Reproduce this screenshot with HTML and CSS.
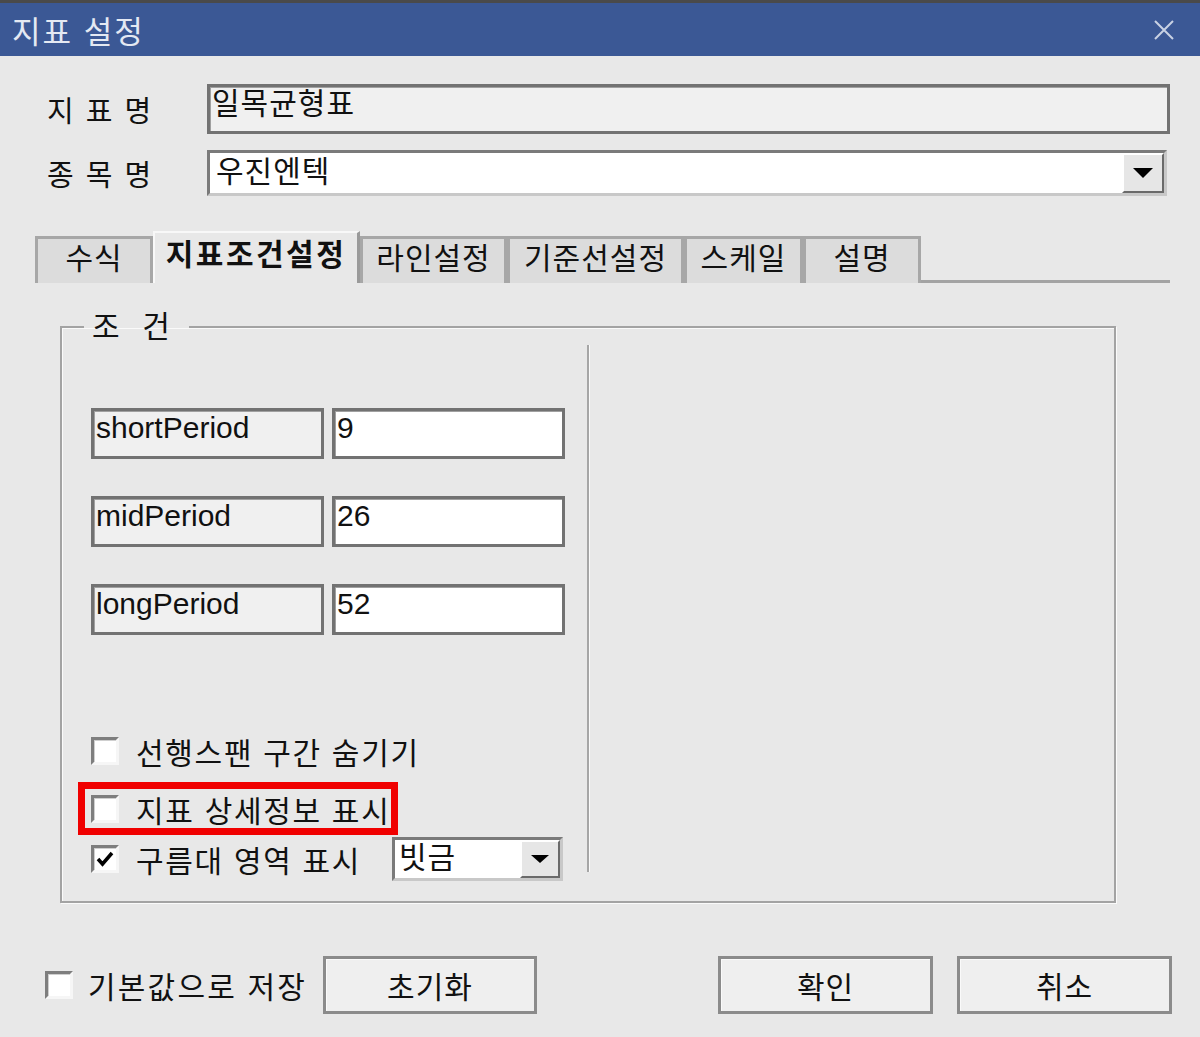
FILE: index.html
```html
<!DOCTYPE html>
<html lang="ko">
<head>
<meta charset="utf-8">
<title>지표 설정</title>
<link rel="stylesheet" href="styles.css">
</head>
<body>
<div class="dialog">
  <div class="titlebar">
    <span class="title">지표 설정</span>
    <svg class="close" width="22" height="22" viewBox="0 0 22 22"><path d="M2 2 L20 20 M20 2 L2 20" stroke="#c9d2e4" stroke-width="2" fill="none"/></svg>
  </div>

  <div class="row row-name">
    <span class="row-label">지 표 명</span>
    <div class="edit readonly wide">일목균형표</div>
  </div>
  <div class="row row-item">
    <span class="row-label">종 목 명</span>
    <div class="combo wide-combo">
      <span class="combo-text">우진엔텍</span>
      <span class="drop"><svg width="22" height="12" viewBox="0 0 22 12"><path d="M1 1 H21 L11 11 Z" fill="#000"/></svg></span>
    </div>
  </div>

  <div class="tabs">
    <div class="tab t1">수식</div>
    <div class="tab t2 active">지표조건설정</div>
    <div class="tab t3">라인설정</div>
    <div class="tab t4">기준선설정</div>
    <div class="tab t5">스케일</div>
    <div class="tab t6">설명</div>
  </div>

  <fieldset class="group">
    <legend>조&nbsp; 건</legend>
    <div class="group-body">
      <div class="left-col">
        <div class="param first">
          <div class="edit readonly pname">shortPeriod</div>
          <div class="edit pval">9</div>
        </div>
        <div class="param">
          <div class="edit readonly pname">midPeriod</div>
          <div class="edit pval">26</div>
        </div>
        <div class="param">
          <div class="edit readonly pname">longPeriod</div>
          <div class="edit pval">52</div>
        </div>

        <div class="check-row cr1">
          <span class="box"></span>
          <span class="ctext">선행스팬 구간 숨기기</span>
        </div>
        <div class="check-row cr2 highlight">
          <span class="box"></span>
          <span class="ctext">지표 상세정보 표시</span>
        </div>
        <div class="check-row cr3">
          <span class="box checked"><svg width="18" height="16" viewBox="0 0 18 16"><path d="M2 8 L6.5 13 L16 2" stroke="#000" stroke-width="3.5" fill="none"/></svg></span>
          <span class="ctext cloud">구름대 영역 표시</span>
          <div class="combo small-combo">
            <span class="combo-text">빗금</span>
            <span class="drop"><svg width="20" height="10" viewBox="0 0 20 10"><path d="M1 1 H19 L10 9 Z" fill="#000"/></svg></span>
          </div>
        </div>
      </div>
      <div class="separator"></div>
    </div>
  </fieldset>

  <div class="bottom">
    <div class="save-default">
      <span class="box"></span>
      <span class="ctext">기본값으로 저장</span>
    </div>
    <div class="btn reset">초기화</div>
    <div class="spacer"></div>
    <div class="btn ok">확인</div>
    <div class="btn cancel">취소</div>
  </div>
</div>
</body>
</html>
```

FILE: styles.css
```css
* { box-sizing: border-box; }
html, body {
  margin: 0;
  padding: 0;
  background: #e8e8e8;
}
body {
  font-family: "Liberation Sans", "Noto Sans CJK KR", sans-serif;
  font-size: 30px;
  color: #111;
}
.dialog {
  width: 1200px;
  height: 1037px;
  overflow: hidden;
  background: #e8e8e8;
}
.titlebar {
  height: 56px;
  border-top: 3px solid #4a4a4a;
  background: #3b5895;
  display: flex;
  align-items: center;
  padding: 0 25px 0 12px;
}
.title {
  color: #e4e9f3;
  font-size: 31px;
  letter-spacing: 2px;
  flex: 1;
}
.close { display: block; }

.row {
  display: flex;
  align-items: center;
  padding-left: 47px;
}
.row-label {
  width: 160px;
  font-size: 29px;
  letter-spacing: 2px;
}
.row-name { margin-top: 28px; height: 50px; }
.row-item { margin-top: 16px; height: 46px; }

.edit {
  border: 3px solid #727272;
  box-shadow: inset 1px 1px 0 #a0a0a0;
  background: #fff;
  font-size: 30px;
  line-height: 34px;
  padding: 0 0 0 2px;
  overflow: hidden;
  white-space: nowrap;
}
.edit.readonly { background: #f0f0f0; }
.wide { width: 963px; height: 50px; letter-spacing: 1px; }

.combo {
  display: flex;
  align-items: stretch;
  flex-shrink: 0;
  background: #fff;
  border: 3px solid #7a7a7a;
  border-right-color: #c8c8c8;
  border-bottom-color: #c8c8c8;
}
.combo-text {
  flex: 1;
  padding-left: 6px;
  line-height: 38px;
  letter-spacing: 1px;
}
.drop {
  display: flex;
  align-items: center;
  justify-content: center;
  background: #e6e6e6;
  border: 2px solid;
  border-color: #ffffff #6a6a6a #6a6a6a #ffffff;
}
.wide-combo { width: 960px; height: 46px; }
.wide-combo .drop { width: 42px; }

.tabs {
  margin: 38px 0 0 35px;
  width: 1135px;
  height: 49px;
  display: flex;
  align-items: flex-end;
  border-bottom: 3px solid #a3a3a3;
}
.tab {
  height: 47px;
  margin-bottom: -3px;
  border: 3px solid #a7a7a7;
  border-bottom: none;
  background: #dcdcdc;
  font-size: 30px;
  line-height: 40px;
  text-align: center;
  letter-spacing: 1px;
}
.tab.active {
  height: 52px;
  background: #e8e8e8;
  border-color: #f8f8f8 #9a9a9a #e8e8e8 #f8f8f8;
  border-width: 2px 3px 0 2px;
  font-weight: bold;
  line-height: 44px;
  padding-bottom: 6px;
  margin-bottom: -3px;
  letter-spacing: 2.5px;
  position: relative;
  z-index: 1;
}
.t1 { width: 118px; }
.t2 { width: 207px; }
.t3 { width: 147px; }
.t4 { width: 177px; }
.t5 { width: 119px; }
.t6 { width: 118px; }

.group {
  margin: 26px 0 0 60px;
  width: 1056px;
  padding: 0 0 29px 0;
  border: 2px solid #a3a3a3;
  box-shadow: inset 1px 1px 0 #fafafa, 1px 1px 0 #fafafa;
  min-width: 0;
}
.group legend {
  margin-left: 22px;
  padding: 0 17px 0 8px;
  font-size: 30px;
  line-height: 36px;
  letter-spacing: 2px;
}
.group-body {
  display: flex;
  height: 527px;
}
.left-col {
  width: 474px;
  flex-shrink: 0;
  margin-left: 29px;
  display: flex;
  flex-direction: column;
}
.separator {
  margin-left: 22px;
  width: 3px;
  height: 527px;
  border-left: 2px solid #a6a6a6;
  border-right: 1px solid #fafafa;
}

.param {
  display: flex;
  gap: 8px;
  margin-top: 37px;
  height: 51px;
}
.param.first { margin-top: 63px; }
.pname, .pval { width: 233px; height: 51px; }

.check-row {
  display: flex;
  align-items: center;
  flex-shrink: 0;
}
.cr1 { margin-top: 96px; height: 40px; }
.cr2 { margin-top: 11px; height: 53px; }
.cr3 { margin-top: 2px; height: 44px; }
.highlight {
  width: 320px;
  margin-left: -13px;
  padding-left: 6px;
  border: 7px solid #f00000;
}
.box {
  width: 28px;
  height: 28px;
  flex-shrink: 0;
  background: #fff;
  border: 3px solid;
  border-color: #7e7e7e #f6f6f6 #f6f6f6 #7e7e7e;
  box-shadow: inset 1px 1px 0 #cfcfcf;
  display: flex;
  align-items: center;
  justify-content: center;
}
.ctext {
  margin-left: 17px;
  font-size: 30px;
  letter-spacing: 1.7px;
  white-space: nowrap;
}
.ctext.cloud { width: 256px; flex-shrink: 0; }
.small-combo {
  margin-left: 0;
  width: 171px;
  height: 44px;
}
.small-combo .drop { width: 40px; }
.small-combo .combo-text { line-height: 36px; padding-left: 4px; }

.bottom {
  display: flex;
  align-items: center;
  margin-top: 53px;
  height: 58px;
  padding-left: 45px;
  padding-right: 28px;
}
.save-default {
  display: flex;
  align-items: center;
  width: 278px;
}
.save-default .ctext { margin-left: 15px; letter-spacing: 2.2px; }
.btn {
  height: 58px;
  border: 3px solid #8b8b8b;
  box-shadow: inset 1px 1px 0 #fafafa;
  background: #efefef;
  display: flex;
  align-items: center;
  justify-content: center;
  font-size: 30px;
  letter-spacing: 1px;
}
.reset { width: 214px; }
.spacer { flex: 1; }
.ok { width: 215px; }
.cancel { width: 215px; margin-left: 24px; }
```
